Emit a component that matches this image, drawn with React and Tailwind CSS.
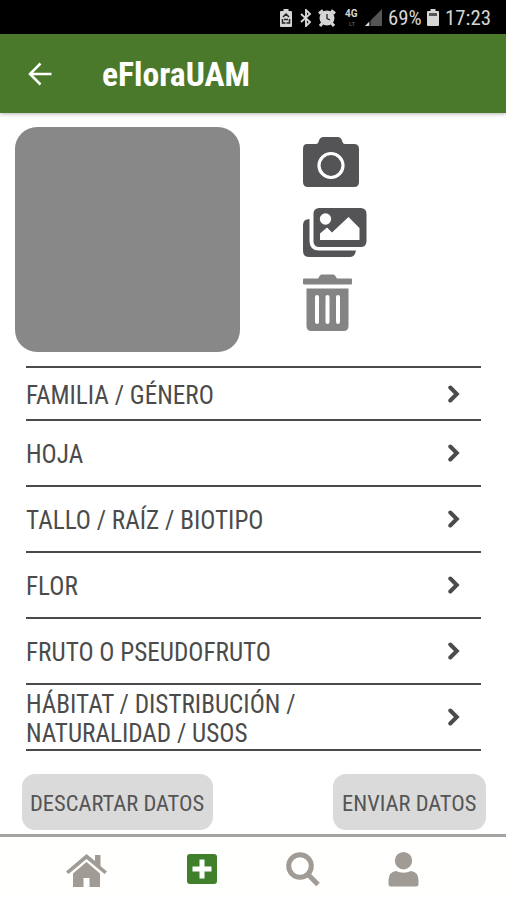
import { useState } from "react";

const sections = [
  { id: "familia", lines: ["FAMILIA / GÉNERO"], rowClass: "h-[53px]" },
  { id: "hoja", lines: ["HOJA"], rowClass: "h-[66px]" },
  { id: "tallo", lines: ["TALLO / RAÍZ / BIOTIPO"], rowClass: "h-[66px]" },
  { id: "flor", lines: ["FLOR"], rowClass: "h-[66px]" },
  { id: "fruto", lines: ["FRUTO O PSEUDOFRUTO"], rowClass: "h-[66px]" },
  {
    id: "habitat",
    lines: ["HÁBITAT / DISTRIBUCIÓN /", "NATURALIDAD / USOS"],
    rowClass: "h-[66px]",
  },
];

// Condensed text line
function Label({ className, children }) {
  return (
    <span
      className={`block shrink-0 font-['Roboto',sans-serif] whitespace-nowrap [font-stretch:75%] ${className}`}
    >
      {children}
    </span>
  );
}

function StatusBar() {
  return (
    <div className="flex h-[34px] shrink-0 items-center bg-black pt-[1px] pl-[280px] text-[#d6d6d6]">
      <svg className="h-[18px] w-3 shrink-0" viewBox="0 0 12 18" fill="currentColor">
        <path d="M3.5 0h5v2H11q1 0 1 1v14q0 1-1 1H1q-1 0-1-1V3q0-1 1-1h2.5z" />
        <path
          d="M3 8l3-3 3 3M2.5 10v4h3M9.5 10v4h-3M4 10.5h4"
          fill="none"
          stroke="#222"
          strokeWidth="1.5"
        />
      </svg>
      <svg className="ml-2 h-[18px] w-3 shrink-0" viewBox="0 0 12 18" fill="none" stroke="currentColor" strokeWidth="1.9">
        <path d="M1 5l9 8-4 4V1l4 4-9 8" />
      </svg>
      <svg className="ml-[6px] h-[18px] w-[18px] shrink-0" viewBox="0 0 18 18">
        <path d="M1 4.5l4-3M17 4.5l-4-3M4.5 14L2 17M13.5 14l2.5 3" stroke="currentColor" strokeWidth="3" />
        <circle cx="9" cy="9" r="7.5" fill="currentColor" />
        <path d="M9 5v4.5l3 1.5" fill="none" stroke="#222" strokeWidth="1.3" />
      </svg>
      <div className="ml-[9px] w-4 shrink-0 font-['Roboto',sans-serif] text-[10px] leading-[12px] font-bold">
        <div>4G</div>
        <div className="pl-1 text-[6px] leading-[8px] text-[#4a4a4a]">LT</div>
      </div>
      <svg className="ml-1 h-[17px] w-[17px] shrink-0" viewBox="0 0 17 17">
        <path d="M17 0v17H0z" fill="#555" />
        <path d="M4.5 12.5V17H0z" fill="currentColor" />
        <path d="M5 11v6" stroke="#000" strokeWidth="1" />
      </svg>
      <Label className="ml-[6px] w-[34px] text-[20.8px] leading-[34px]">69%</Label>
      <svg className="ml-[5px] h-[17px] w-3 shrink-0" viewBox="0 0 12 17" fill="currentColor">
        <path d="M3.5 0h5v2H11q1 0 1 1v13q0 1-1 1H1q-1 0-1-1V3q0-1 1-1h2.5z" />
        <path d="M2 4h8v3H2z" fill="#555" />
      </svg>
      <Label className="ml-[6px] text-[20.8px] leading-[34px]">17:23</Label>
    </div>
  );
}

function CameraIcon() {
  return (
    <svg className="h-[50px] w-[56px]" viewBox="0 0 56 50" fill="#545456">
      <path d="M4 7h9q2 0 2.5-2l.5-1.5Q17 0 20.5 0h14Q38 0 39 3.5l.5 1.5q.5 2 2.5 2h9q5 0 5 5v33q0 5-5 5H5q-5 0-5-5V12q0-5 4-5z" />
      <circle cx="28" cy="28.5" r="12" fill="none" stroke="#fff" strokeWidth="3.2" />
    </svg>
  );
}

function ImagesIcon() {
  return (
    <svg className="h-[50px] w-[64px]" viewBox="0 0 64 50">
      <path d="M6.5 11v22q0 9.5 9.5 9.5h37q-1 6.5-6 6.5H6q-6 0-6-6V17q0-6 6.5-6z" fill="#545456" />
      <rect x="10.5" y="0" width="53" height="39" rx="5.5" fill="#545456" />
      <circle cx="22.5" cy="11" r="5.7" fill="#fff" />
      <path d="M17 32v-6.5l7-6 5 5L45.5 9 56.5 20v12z" fill="#fff" />
    </svg>
  );
}

function TrashIcon() {
  return (
    <svg className="h-[57px] w-[49px]" viewBox="0 0 49 57" fill="#848484">
      <path d="M1 4.5h14l2-3Q17.5.5 19 .5h11q1.5 0 2 1l2 3h14q1 0 1 1v4q0 1-1 1H1q-1 0-1-1v-4q0-1 1-1z" />
      <path d="M3.5 14.5h42V52q0 5-5 5h-32q-5 0-5-5z" />
      <path d="M14 23v25M24.5 23v25M35 23v25" stroke="#fff" strokeWidth="4" strokeLinecap="round" />
    </svg>
  );
}

function ChevronIcon() {
  return (
    <svg
      className="mr-[21px] h-[18px] w-3 shrink-0"
      viewBox="0 0 12 18"
      fill="none"
      stroke="#4b4b4b"
      strokeWidth="4"
      strokeLinecap="round"
    >
      <path d="M2.3 2.5L8.8 9l-6.5 6.5" />
    </svg>
  );
}

function SectionRow({ section }) {
  return (
    <button
      type="button"
      className={`flex w-full items-center justify-between border-b-2 border-[#4a4a4a] text-left text-[#4b4b4b] ${section.rowClass}`}
    >
      <span className="pt-[3px]">
        {section.lines.map((line) => (
          <Label key={line} className="text-[25.2px] leading-[29px]">
            {line}
          </Label>
        ))}
      </span>
      <ChevronIcon />
    </button>
  );
}

function BottomNav({ active, onSelect }) {
  const color = (name) => (active === name ? "#41802a" : "#a09b95");

  return (
    <nav className="flex h-[66px] shrink-0 items-start border-t-[3px] border-[#a5a3a2] bg-[#fffffd] pt-[15px] pl-[66px]">
      <button type="button" aria-label="Inicio" className="mt-[2px]" onClick={() => onSelect("home")}>
        <svg className="h-[33px] w-[41px]" viewBox="0 0 41 33" fill={color("home")}>
          <path d="M20.5 0L29 7V1h5.5v11L41 17.5 38.5 20 20.5 5 2.5 20 0 17.5z" />
          <path d="M20.5 8L34 19.5V33H23.5v-9h-6v9H7V19.5z" />
        </svg>
      </button>
      <button type="button" aria-label="Añadir" className="mt-[2px] ml-[80px]" onClick={() => onSelect("add")}>
        <svg className="h-[30px] w-[30px]" viewBox="0 0 30 30">
          <rect width="30" height="30" rx="3" fill={color("add")} />
          <path d="M12.5 5.5h5v7h7v5h-7v7h-5v-7h-7v-5h7z" fill="#fff" />
        </svg>
      </button>
      <button type="button" aria-label="Buscar" className="ml-[69px]" onClick={() => onSelect("search")}>
        <svg className="h-[35px] w-[35px]" viewBox="0 0 35 35" fill="none" stroke={color("search")}>
          <circle cx="14" cy="14" r="11.3" strokeWidth="5" />
          <path d="M22 22.5L32 32.5" strokeWidth="5" />
        </svg>
      </button>
      <button type="button" aria-label="Perfil" className="ml-[67px]" onClick={() => onSelect("profile")}>
        <svg className="h-[35px] w-[31px]" viewBox="0 0 31 35" fill={color("profile")}>
          <circle cx="15.5" cy="8.7" r="8.7" />
          <path d="M8 19q7.5 3.5 15 0 7.5 1 7.5 9v4q0 2.5-2.5 2.5H3Q.5 34.5.5 32v-4Q.5 20 8 19z" />
        </svg>
      </button>
    </nav>
  );
}

export default function App() {
  const [activeTab, setActiveTab] = useState("add");

  return (
    <div className="flex h-[900px] w-[506px] flex-col overflow-hidden bg-white">
      <StatusBar />

      {/* Header */}
      <header className="flex h-[79px] shrink-0 items-center bg-[#4b792b] pl-[28px] text-white shadow-[0_1px_4px_rgba(0,0,0,0.3)]">
        <svg className="h-6 w-6" viewBox="0 0 24 24" fill="none" stroke="currentColor" strokeWidth="2.5">
          <path d="M23.5 12H2M12.5 1.5L2 12l10.5 10.5" />
        </svg>
        <Label className="ml-[50px] pt-[4px] text-[33.6px] font-bold">eFloraUAM</Label>
      </header>

      <main className="flex h-[721px] flex-col">
        {/* Photo and its actions */}
        <div className="flex h-[253px] pt-[14px] pl-[15px]">
          <div className="h-[225px] w-[225px] rounded-[22px] bg-[#888]" />
          <div className="flex flex-col items-start pt-[10px] pl-[63px]">
            <CameraIcon />
            <div className="mt-[21px]">
              <ImagesIcon />
            </div>
            <div className="mt-4">
              <TrashIcon />
            </div>
          </div>
        </div>

        {/* Sections */}
        <div className="mr-[25px] ml-[26px] border-t-2 border-[#4a4a4a]">
          {sections.map((section) => (
            <SectionRow key={section.id} section={section} />
          ))}
        </div>

        {/* Form actions */}
        <div className="mt-[23px] flex justify-between pr-[20px] pl-[22px] text-[#555]">
          <button type="button" className="flex h-14 w-[191px] items-center rounded-[13px] bg-[#dadada] pt-[3px] pl-[8px]">
            <Label className="text-[22.5px]">DESCARTAR DATOS</Label>
          </button>
          <button type="button" className="flex h-14 w-[153px] items-center rounded-[13px] bg-[#dadada] pt-[3px] pl-[9px]">
            <Label className="text-[22.5px]">ENVIAR DATOS</Label>
          </button>
        </div>
      </main>

      <BottomNav active={activeTab} onSelect={setActiveTab} />
    </div>
  );
}
